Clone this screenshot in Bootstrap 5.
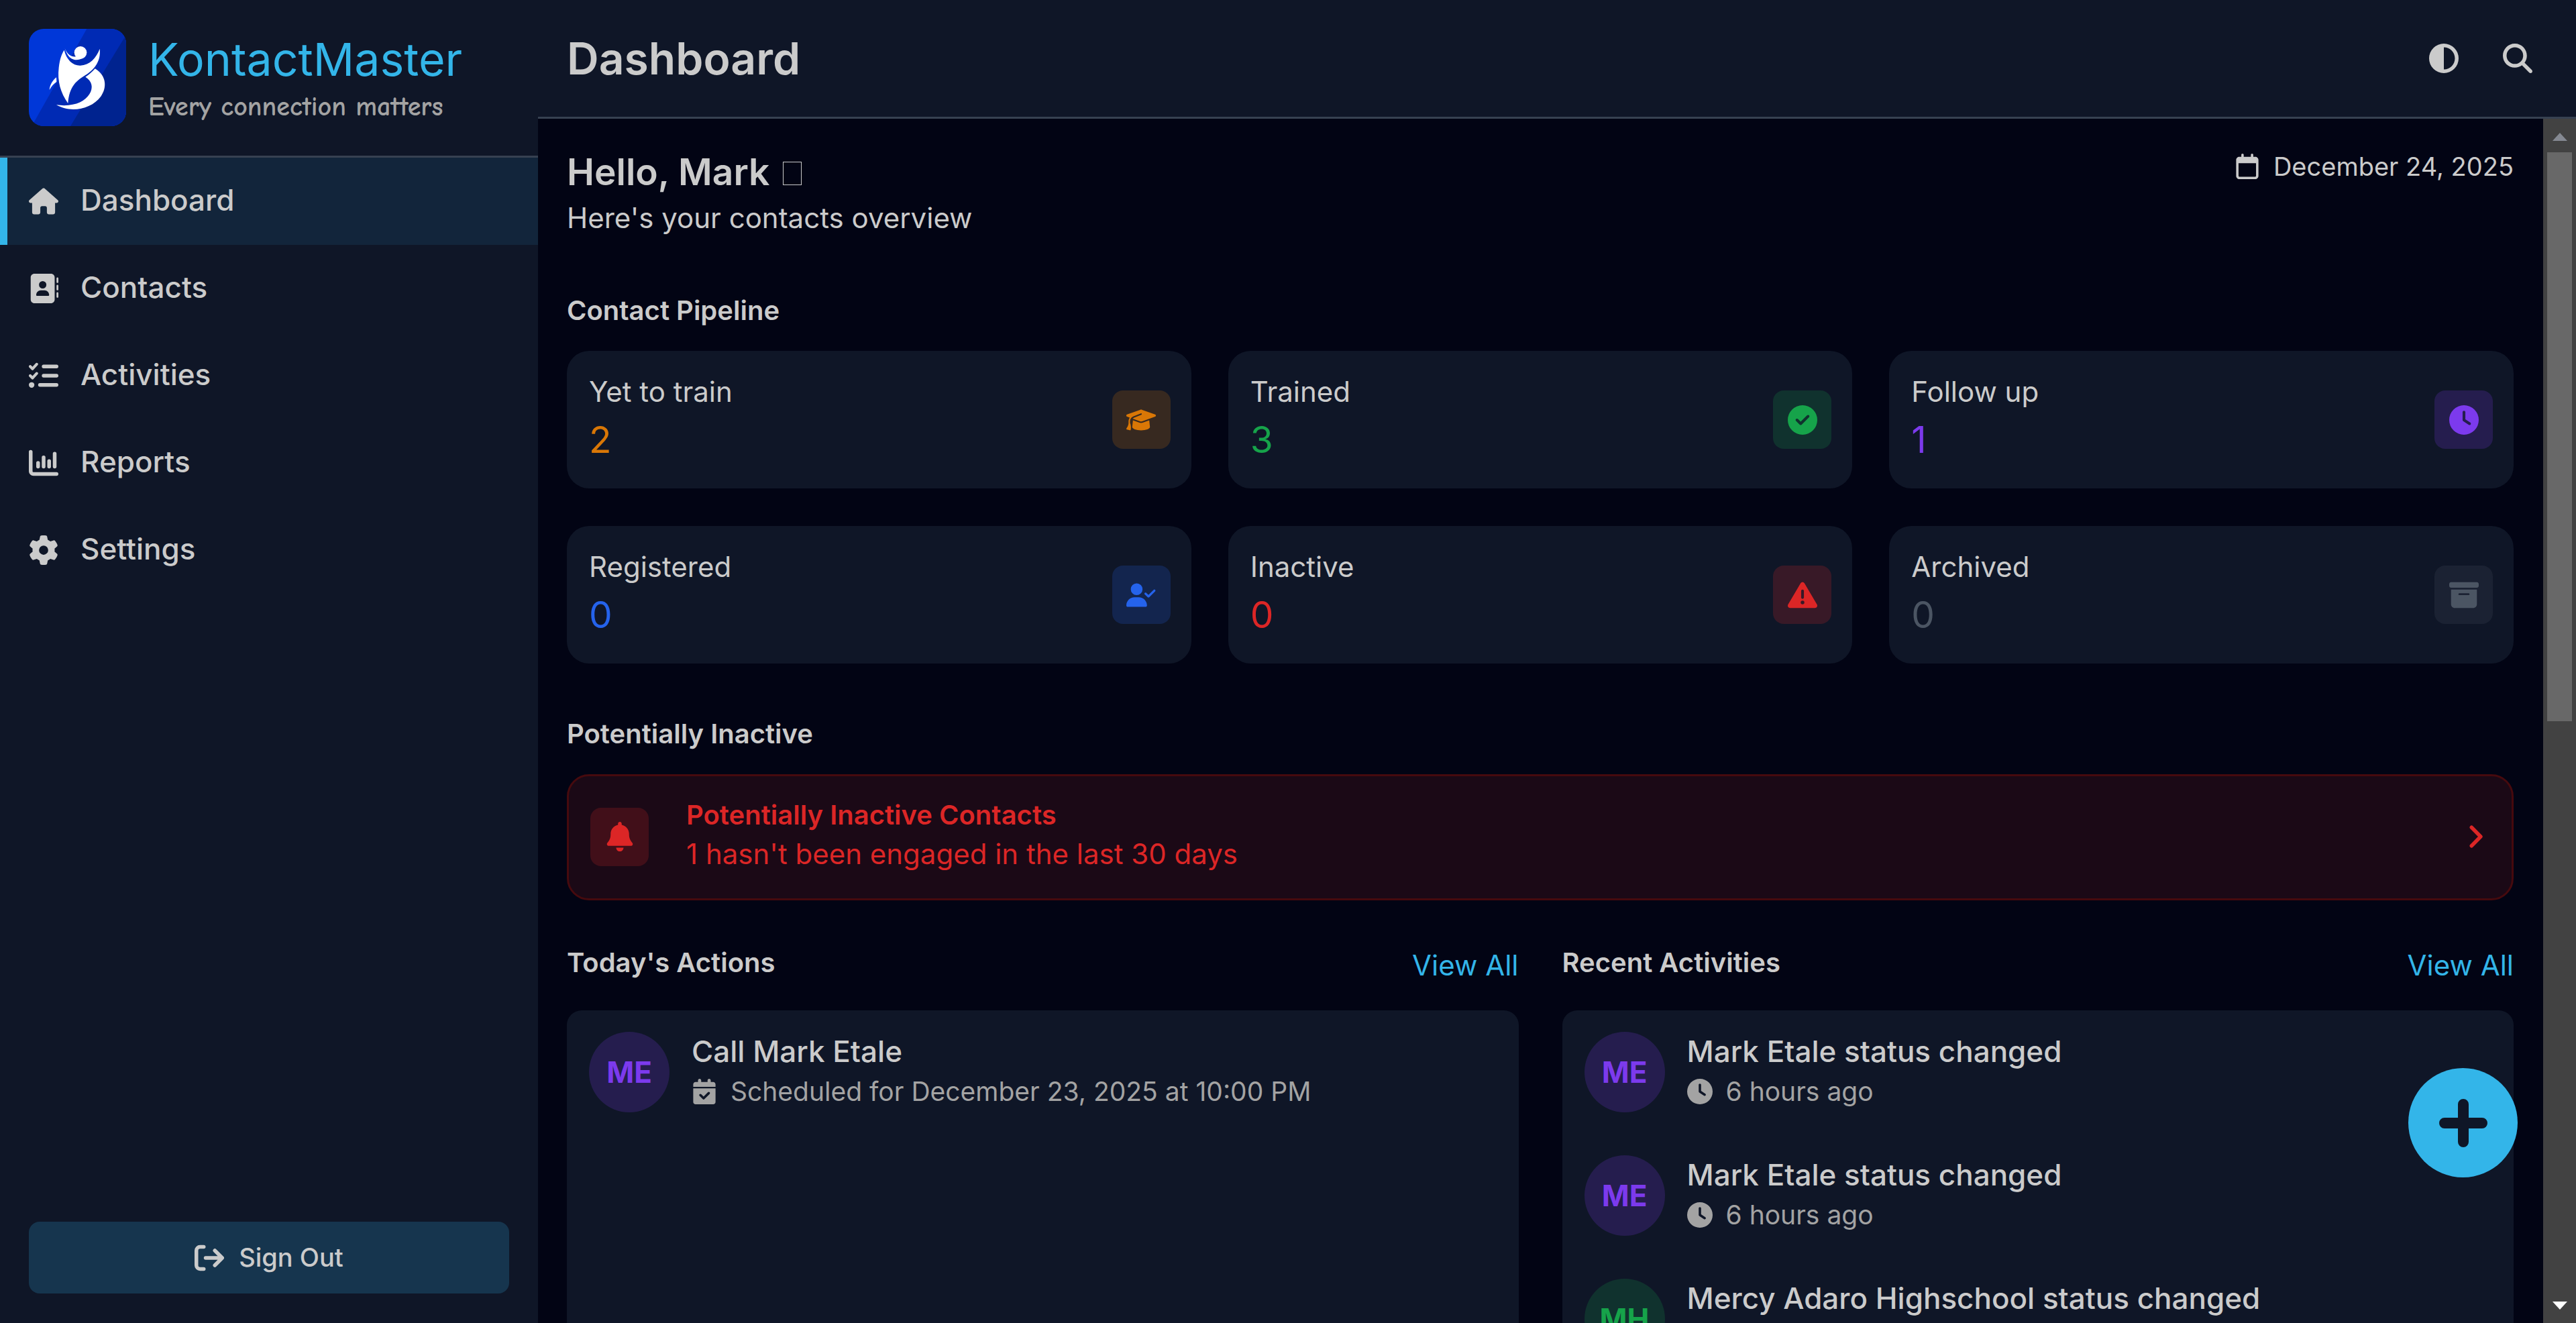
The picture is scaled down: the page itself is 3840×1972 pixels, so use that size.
<!DOCTYPE html>
<html lang="en" data-bs-theme="dark">
<head>
<meta charset="utf-8">
<meta name="viewport" content="width=device-width, initial-scale=1">
<title>KontactMaster - Dashboard</title>
<link href="https://cdn.jsdelivr.net/npm/bootstrap@5.3.0/dist/css/bootstrap.min.css" rel="stylesheet">
<style>
:root{--page:#020414;--surface:#0f1627;--ink:#cbcbcb;--dim:#a3a3a3;--line:#374151;--accent:#33b5e9;
--orange:217,119,6;--green:22,163,74;--purple:124,58,237;--blue:37,99,235;--red:220,38,38;--gray:75,85,99}
body{font-family:Inter,"Liberation Sans",sans-serif;font-size:42px;line-height:58px;background:var(--page);color:var(--ink)}
svg{display:block;flex:none;fill:currentColor}
h1,h2,h3,p{margin:0}
h1,h2,h3{color:inherit}
a{text-decoration:none}
.ico{width:44px;height:44px}
.ico-sm{width:38px;height:38px}
.stroke{fill:none;stroke:currentColor;stroke-linecap:round;stroke-linejoin:round}
.app-side{width:802px;background:var(--surface)}
.brand{padding:43px 43px 44px;gap:33px;border-bottom:3px solid var(--line)}
.brand-name{font-size:68px;line-height:86px;font-weight:400;color:var(--accent)}
.brand-tag{font-family:"Comic Sans MS","Comic Neue",cursive;font-size:40px;line-height:56px;font-weight:700;color:var(--dim)}
.side-link{height:130px;padding:0 43px;gap:33px;color:var(--ink);font-size:44px;font-weight:500;border-radius:0}
.side-link span{padding-bottom:5px}
.side-link:hover{color:var(--accent)}
.side-link.active{background:rgba(51,181,233,.1);color:var(--ink);box-shadow:inset 11px 0 var(--accent)}
.side-foot{padding:44px 43px}
.btn-out{height:107px;border:0;border-radius:16px;background:rgba(51,181,233,.2);color:var(--ink);font-size:38px;font-weight:500;gap:22px}
.topbar{height:177px;padding:0 43px;background:var(--surface);border-bottom:3px solid var(--line)}
.page-name{font-size:66px;line-height:80px;font-weight:600}
.tools{gap:22px}
.btn-tool{width:88px;height:88px;padding:0;color:var(--ink);border:0}
.content{padding:43px 44px 0 43px;min-width:0}
.hello{font-size:55px;line-height:72px;font-weight:600}
.wave-box{display:inline-block;width:28px;height:35px;margin-left:6px;border:1px solid var(--ink)}
.sub{line-height:66px}
.date{font-size:38px;gap:22px;line-height:56px}
.sect{font-size:40px;line-height:58px;font-weight:600}
.sect-gap{margin-top:76px}
.tiles{display:grid;grid-template-columns:repeat(3,1fr);gap:56px 55px;margin-top:31px}
.tile{background:var(--surface);color:inherit;border:0;border-radius:33px;padding:33px 31px 33px 33px;height:205px;flex-direction:row}
.tile-num{font-size:55px;line-height:84px;color:rgb(var(--c))}
.chip{width:87px;height:87px;border-radius:16px;background:rgba(var(--c),.2);color:rgb(var(--c))}
.c-orange{--c:var(--orange)}.c-green{--c:var(--green)}.c-purple{--c:var(--purple)}.c-blue{--c:var(--blue)}.c-red{--c:var(--red)}.c-gray{--c:var(--gray)}
.alert-row{border:3px solid #460a0e;border-radius:33px;background:#1b0916;color:rgb(var(--red));padding:30px 42px 32px 32px;height:188px;gap:56px;margin-top:31px}
.alert-row:hover{color:rgb(var(--red))}
.alert-text{padding-bottom:6px}
.lists{display:grid;grid-template-columns:1fr 1fr;gap:65px;margin-top:64px}
.view-all{color:var(--accent);line-height:66px}
.panel{background:var(--surface);border-radius:22px;padding:0 33px;margin-top:34px}
.entry{padding:32px 0;gap:33px}
.entry-name{font-size:44px;line-height:58px;font-weight:500}
.avatar{width:120px;height:120px;border-radius:50%;font-size:44px;font-weight:700;background:rgba(var(--c),.2);color:rgb(var(--c))}
.entry-sub{font-size:39px;line-height:62px;color:var(--dim);gap:20px}
.scrollbar-col{width:49px;background:#424242;padding:21px 0 20px}
.scroll-thumb{width:37px;height:848px;margin-top:17px;background:#686868}
.fab{right:87px;bottom:217px;width:163px;height:163px;border:0;background:var(--accent);color:var(--surface)}
</style>
</head>
<body class="vh-100 d-flex overflow-hidden">
<aside class="app-side d-flex flex-column flex-shrink-0">
  <div class="brand d-flex align-items-center">
    <svg width="145" height="145" viewBox="9 9 435 435" role="img" aria-label="KontactMaster logo">
      <defs><clipPath id="lg"><rect x="9" y="9" width="435" height="435" rx="66"/></clipPath></defs>
      <g clip-path="url(#lg)">
        <path fill="#0037d8" d="M9 9h435v435H9z"/>
        <path fill="#002ab4" d="M268 9h176v435H22z"/>
        <path fill="#00238f" d="M444 36v408H195z"/>
      </g>
      <g fill="#fff">
        <circle cx="240" cy="115" r="28"/>
        <path d="M170 97c12 28 28 38 50 36l32 6c-28 17-56 9-70-15-4-7-9-17-12-27z"/>
        <path d="M167 104c10 44 40 70 72 69 42-2 72-34 87-75 6 54-22 90-58 114-46 28-78 52-84 130-34-50-48-98-41-160 4-36 12-60 24-78z"/>
        <path d="M305 187c52 30 54 86 26 124-44 60-138 74-199 38 74 10 126-12 148-48 18-30 12-58-18-77 16-10 30-22 43-37z"/>
        <path d="M132 226l1 20c-12 8-22 18-32 36 2-22 14-42 31-56z"/>
      </g>
    </svg>
    <div>
      <div class="brand-name">KontactMaster</div>
      <div class="brand-tag">Every connection matters</div>
    </div>
  </div>
  <nav class="nav flex-column">
    <a class="side-link nav-link d-flex align-items-center active" href="#" aria-current="page">
      <svg class="ico" viewBox="0 0 576 512"><path d="M575.800 255.500c0 18-15 32.100-32 32.100h-32l.7 160.200c0 2.700-.2 5.400-.5 8.100V472c0 22.100-17.900 40-40 40H392c-22.100 0-40-17.900-40-40V384c0-17.700-14.300-32-32-32H256c-17.700 0-32 14.300-32 32v88c0 22.100-17.900 40-40 40H104c-22.100 0-40-17.900-40-40V287.600H32c-18 0-32-14-32-32.100c0-9 3-17 10-24L266.400 8c7-7 15-8 22-8s15 2 21 7L564.800 231.500c8 7 12 15 11 24z"/></svg><span>Dashboard</span></a>
    <a class="side-link nav-link d-flex align-items-center" href="#">
      <svg class="ico" viewBox="0 0 512 512"><path d="M96 0C60.700 0 32 28.700 32 64V448c0 35.300 28.700 64 64 64H384c35.300 0 64-28.700 64-64V64c0-35.300-28.700-64-64-64H96zM208 288h64c44.200 0 80 35.800 80 80c0 8.800-7.200 16-16 16H144c-8.800 0-16-7.200-16-16c0-44.200 35.800-80 80-80zm-32-96a64 64 0 1 1 128 0 64 64 0 1 1 -128 0zM512 80c0-8.800-7.200-16-16-16s-16 7.200-16 16v64c0 8.800 7.200 16 16 16s16-7.200 16-16V80zM496 192c-8.800 0-16 7.200-16 16v64c0 8.800 7.200 16 16 16s16-7.200 16-16V208c0-8.800-7.200-16-16-16zm16 144c0-8.800-7.200-16-16-16s-16 7.200-16 16v64c0 8.800 7.200 16 16 16s16-7.200 16-16V336z"/></svg><span>Contacts</span></a>
    <a class="side-link nav-link d-flex align-items-center" href="#">
      <svg class="ico" viewBox="0 0 512 512"><path class="stroke" stroke-width="48" d="M24 96l40 40 72-80M24 256l40 40 72-80"/><path class="stroke" stroke-width="62" d="M256 96h225M256 256h225M192 416h289"/><circle cx="48" cy="416" r="48"/></svg><span>Activities</span></a>
    <a class="side-link nav-link d-flex align-items-center" href="#">
      <svg class="ico" viewBox="0 0 512 512"><path class="stroke" stroke-width="64" d="M32 64v336a48 48 0 0 0 48 48h400M160 256v64M256 160v160M352 224v96M448 96v224"/></svg><span>Reports</span></a>
    <a class="side-link nav-link d-flex align-items-center" href="#">
      <svg class="ico" viewBox="0 0 512 512"><path d="M495.900 166.600c3.200 8.700 .5 18.400-6.400 24.600l-43.300 39.400c1.100 8.300 1.700 16.800 1.700 25.400s-.6 17.100-1.700 25.400l43.300 39.400c6.900 6.200 9.600 15.900 6.400 24.600c-4.400 11.900-9.700 23.300-15.800 34.300l-4.700 8.100c-6.600 11-14 21.400-22.100 31.200c-5.900 7.200-15.700 9.600-24.500 6.800l-55.700-17.700c-13.400 10.300-28.200 18.900-44 25.400l-12.500 57.100c-2 9.100-9 16.300-18.200 17.800c-13.800 2.300-28 3.500-42.500 3.500s-28.700-1.200-42.500-3.500c-9.200-1.500-16.200-8.700-18.200-17.800l-12.500-57.100c-15.800-6.500-30.600-15.100-44-25.400L83.100 425.900c-8.800 2.800-18.600 .3-24.500-6.800c-8.100-9.800-15.500-20.200-22.100-31.200l-4.700-8.100c-6.100-11-11.400-22.400-15.800-34.300c-3.200-8.700-.5-18.400 6.400-24.600l43.300-39.400C64.600 273.100 64 264.600 64 256s.6-17.100 1.700-25.400L22.400 191.200c-6.900-6.200-9.600-15.900-6.400-24.600c4.400-11.900 9.700-23.300 15.800-34.300l4.700-8.100c6.600-11 14-21.400 22.100-31.200c5.900-7.200 15.700-9.600 24.500-6.800l55.700 17.700c13.400-10.300 28.200-18.900 44-25.400l12.500-57.100c2-9.100 9-16.300 18.200-17.800C227.300 1.200 241.500 0 256 0s28.700 1.200 42.500 3.500c9.200 1.500 16.200 8.700 18.200 17.800l12.500 57.100c15.800 6.500 30.600 15.100 44 25.400l55.700-17.700c8.800-2.800 18.600-.3 24.500 6.800c8.100 9.800 15.500 20.200 22.100 31.200l4.700 8.100c6.100 11 11.400 22.400 15.800 34.300zM256 336a80 80 0 1 0 0-160 80 80 0 1 0 0 160z"/></svg><span>Settings</span></a>
  </nav>
  <div class="side-foot mt-auto">
    <button type="button" class="btn btn-out w-100 d-flex align-items-center justify-content-center">
      <svg class="ico" viewBox="0 0 512 512"><path class="stroke" stroke-width="64" d="M160 64H96a64 64 0 0 0-64 64v256a64 64 0 0 0 64 64h64M192 256h280M352 128l128 128-128 128"/></svg>Sign Out</button>
  </div>
</aside>
<div class="d-flex flex-column flex-grow-1 overflow-hidden">
  <header class="topbar d-flex align-items-center justify-content-between flex-shrink-0">
    <h1 class="page-name">Dashboard</h1>
    <div class="tools d-flex">
      <button type="button" class="btn btn-tool d-flex align-items-center justify-content-center" aria-label="Toggle theme"><svg class="ico" viewBox="0 0 512 512"><path d="M448 256c0-106-86-192-192-192V448c106 0 192-86 192-192zM0 256a256 256 0 1 1 512 0A256 256 0 1 1 0 256z"/></svg></button>
      <button type="button" class="btn btn-tool d-flex align-items-center justify-content-center" aria-label="Search"><svg class="ico" viewBox="0 0 512 512"><path d="M416 208c0 45.900-14.900 88.300-40 122.700L502.600 457.400c12.500 12.500 12.500 32.800 0 45.300s-32.800 12.500-45.300 0L330.700 376c-34.400 25.200-76.800 40-122.700 40C93.100 416 0 322.900 0 208S93.100 0 208 0S416 93.100 416 208zM208 352a144 144 0 1 0 0-288 144 144 0 1 0 0 288z"/></svg></button>
    </div>
  </header>
  <div class="d-flex flex-grow-1 overflow-hidden">
    <main class="content flex-grow-1">
      <div class="d-flex justify-content-between align-items-start">
        <div>
          <h2 class="hello">Hello, Mark <span class="wave-box" role="img" aria-label="waving hand"></span></h2>
          <p class="sub">Here's your contacts overview</p>
        </div>
        <div class="date d-flex align-items-center">
          <svg width="34" height="38" viewBox="0 0 448 512"><path d="M152 24c0-13.300-10.700-24-24-24s-24 10.700-24 24V64H64C28.700 64 0 92.700 0 128V448c0 35.300 28.700 64 64 64H384c35.300 0 64-28.700 64-64V128c0-35.300-28.700-64-64-64H344V24c0-13.300-10.700-24-24-24s-24 10.700-24 24V64H152V24zM48 192H400V448c0 8.800-7.200 16-16 16H64c-8.800 0-16-7.200-16-16V192z"/></svg>
          <span>December 24, 2025</span>
        </div>
      </div>

      <h3 class="sect sect-gap">Contact Pipeline</h3>
      <div class="tiles">
        <div class="tile card justify-content-between align-items-center c-orange">
          <div><div>Yet to train</div><div class="tile-num">2</div></div>
          <div class="chip d-flex align-items-center justify-content-center"><svg class="ico" viewBox="0 0 640 512"><path d="M320 32c-8.100 0-16.100 1.400-23.700 4.100L15.800 137.400C6.300 140.900 0 149.900 0 160s6.300 19.100 15.800 22.600l57.900 20.900C57.300 229.300 48 259.800 48 291.900v28.100c0 28.400-10.800 57.700-22.300 80.800c-6.500 13-13.900 25.800-22.500 37.600C0 442.700-.9 448.300 .9 453.400s6 8.900 11.200 10.200l64 16c4.200 1.100 8.700 .3 12.400-2s6.300-6.100 7.100-10.400c8.600-42.800 4.300-81.200-2.100-108.700C90.300 344.300 86 329.800 80 316.500V291.900c0-30.200 10.200-58.700 27.900-81.500c12.900-15.500 29.600-28 49.200-35.700l157-61.700c8.200-3.200 17.500 .8 20.700 9s-.8 17.500-9 20.700l-157 61.700c-12.400 4.900-23.300 12.400-32.200 21.600l159.600 57.600c7.600 2.700 15.600 4.100 23.700 4.100s16.100-1.400 23.700-4.100L624.200 182.600c9.500-3.400 15.800-12.500 15.800-22.600s-6.300-19.100-15.800-22.600L343.700 36.100C336.100 33.400 328.100 32 320 32zM128 408c0 35.300 86 72 192 72s192-36.700 192-72L496.700 262.600 354.500 314c-11.100 4-22.800 6-34.500 6s-23.500-2-34.500-6L143.300 262.600 128 408z"/></svg></div>
        </div>
        <div class="tile card justify-content-between align-items-center c-green">
          <div><div>Trained</div><div class="tile-num">3</div></div>
          <div class="chip d-flex align-items-center justify-content-center"><svg class="ico" viewBox="0 0 512 512"><path d="M256 512A256 256 0 1 0 256 0a256 256 0 1 0 0 512zM369 209L241 337c-9.400 9.400-24.600 9.400-33.900 0l-64-64c-9.400-9.400-9.400-24.600 0-33.900s24.600-9.400 33.900 0l47 47L335 175c9.400-9.400 24.600-9.400 33.900 0s9.400 24.600 0 33.900z"/></svg></div>
        </div>
        <div class="tile card justify-content-between align-items-center c-purple">
          <div><div>Follow up</div><div class="tile-num">1</div></div>
          <div class="chip d-flex align-items-center justify-content-center"><svg class="ico" viewBox="0 0 512 512"><path id="clk" d="M256 0a256 256 0 1 1 0 512A256 256 0 1 1 256 0zM232 120V256c0 8 4 15.500 10.700 20l96 64c11 7.400 25.900 4.400 33.300-6.700s4.400-25.900-6.700-33.300L280 243.200V120c0-13.300-10.700-24-24-24s-24 10.700-24 24z"/></svg></div>
        </div>
        <div class="tile card justify-content-between align-items-center c-blue">
          <div><div>Registered</div><div class="tile-num">0</div></div>
          <div class="chip d-flex align-items-center justify-content-center"><svg class="ico" viewBox="0 0 640 512"><path d="M96 128a128 128 0 1 1 256 0A128 128 0 1 1 96 128zM0 482.300C0 383.800 79.800 304 178.300 304h91.400C368.200 304 448 383.800 448 482.300c0 16.400-13.300 29.700-29.700 29.700H29.700C13.300 512 0 498.700 0 482.300zM625 177L497 305c-9.400 9.400-24.600 9.400-33.900 0l-64-64c-9.400-9.400-9.400-24.600 0-33.900s24.600-9.400 33.900 0l47 47L591 143c9.400-9.400 24.600-9.400 33.900 0s9.400 24.600 0 33.900z"/></svg></div>
        </div>
        <div class="tile card justify-content-between align-items-center c-red">
          <div><div>Inactive</div><div class="tile-num">0</div></div>
          <div class="chip d-flex align-items-center justify-content-center"><svg class="ico" viewBox="0 0 512 512"><path d="M256 32c14.200 0 27.300 7.500 34.500 19.800l216 368c7.300 12.400 7.300 27.700 .2 40.100S486.300 480 472 480H40c-14.300 0-27.600-7.700-34.700-20.100s-7-27.800 .2-40.100l216-368C228.700 39.500 241.800 32 256 32zm0 128c-13.300 0-24 10.700-24 24V296c0 13.300 10.700 24 24 24s24-10.700 24-24V184c0-13.300-10.700-24-24-24zm32 224a32 32 0 1 0 -64 0 32 32 0 1 0 64 0z"/></svg></div>
        </div>
        <div class="tile card justify-content-between align-items-center c-gray">
          <div><div>Archived</div><div class="tile-num">0</div></div>
          <div class="chip d-flex align-items-center justify-content-center"><svg class="ico" viewBox="0 0 512 512"><path d="M32 32H480c17.700 0 32 14.300 32 32V96c0 17.700-14.300 32-32 32H32C14.300 128 0 113.700 0 96V64C0 46.300 14.300 32 32 32zm0 128H480V416c0 35.300-28.700 64-64 64H96c-35.300 0-64-28.700-64-64V160zm128 80c0 8.800 7.200 16 16 16H336c8.800 0 16-7.200 16-16s-7.200-16-16-16H176c-8.800 0-16 7.200-16 16z"/></svg></div>
        </div>
      </div>

      <h3 class="sect sect-gap">Potentially Inactive</h3>
      <a class="alert-row d-flex align-items-center c-red" href="#">
        <span class="chip d-flex align-items-center justify-content-center flex-shrink-0"><svg class="ico" viewBox="0 0 448 512"><path d="M224 0c-17.700 0-32 14.300-32 32V51.200C119 66 64 130.600 64 208v18.800c0 47-17.300 92.400-48.500 127.600l-7.400 8.300c-8.400 9.400-10.400 22.900-5.300 34.400S19.400 416 32 416H416c12.600 0 24-7.400 29.200-18.900s3.100-25-5.300-34.400l-7.400-8.300C401.300 319.200 384 273.900 384 226.800V208c0-77.400-55-142-128-156.800V32c0-17.700-14.300-32-32-32zm45.300 493.300c12-12 18.700-28.300 18.700-45.300H160c0 17 6.700 33.300 18.700 45.300s28.300 18.700 45.300 18.700s33.300-6.700 45.300-18.700z"/></svg></span>
        <span class="alert-text flex-grow-1 d-flex flex-column"><span class="sect">Potentially Inactive Contacts</span><span>1 hasn't been engaged in the last 30 days</span></span>
        <svg width="22" height="44" viewBox="0 0 256 512"><path class="stroke" stroke-width="64" d="M50 96l158 160L50 416"/></svg>
      </a>

      <div class="lists">
        <section>
          <div class="d-flex justify-content-between align-items-start"><h3 class="sect">Today's Actions</h3><a class="view-all" href="#">View All</a></div>
          <div class="panel vh-100">
            <div class="entry d-flex c-purple">
              <div class="avatar d-flex align-items-center justify-content-center flex-shrink-0">ME</div>
              <div><div class="entry-name">Call Mark Etale</div>
              <div class="entry-sub d-flex align-items-center"><svg class="ico-sm" viewBox="0 0 448 512"><path d="M128 0c17.700 0 32 14.300 32 32V64H288V32c0-17.700 14.300-32 32-32s32 14.300 32 32V64h48c26.500 0 48 21.500 48 48v48H0V112C0 85.500 21.500 64 48 64H96V32c0-17.700 14.300-32 32-32zM0 192H448V464c0 26.500-21.500 48-48 48H48c-26.500 0-48-21.500-48-48V192zM329 305c9.400-9.400 9.400-24.600 0-33.900s-24.600-9.400-33.900 0l-87 87-47-47c-9.400-9.400-24.600-9.400-33.900 0s-9.400 24.600 0 33.900l64 64c9.400 9.400 24.600 9.400 33.900 0L329 305z"/></svg>Scheduled for December 23, 2025 at 10:00 PM</div></div>
            </div>
          </div>
        </section>
        <section>
          <div class="d-flex justify-content-between align-items-start"><h3 class="sect">Recent Activities</h3><a class="view-all" href="#">View All</a></div>
          <div class="panel vh-100">
            <div class="entry d-flex c-purple">
              <div class="avatar d-flex align-items-center justify-content-center flex-shrink-0">ME</div>
              <div><div class="entry-name">Mark Etale status changed</div>
              <div class="entry-sub d-flex align-items-center"><svg class="ico-sm" viewBox="0 0 512 512"><use href="#clk"/></svg>6 hours ago</div></div>
            </div>
            <div class="entry d-flex c-purple">
              <div class="avatar d-flex align-items-center justify-content-center flex-shrink-0">ME</div>
              <div><div class="entry-name">Mark Etale status changed</div>
              <div class="entry-sub d-flex align-items-center"><svg class="ico-sm" viewBox="0 0 512 512"><use href="#clk"/></svg>6 hours ago</div></div>
            </div>
            <div class="entry d-flex c-green">
              <div class="avatar d-flex align-items-center justify-content-center flex-shrink-0">MH</div>
              <div><div class="entry-name">Mercy Adaro Highschool status changed</div></div>
            </div>
          </div>
        </section>
      </div>
    </main>
    <div class="scrollbar-col flex-shrink-0 d-flex flex-column align-items-center" aria-hidden="true">
      <svg width="22" height="12" viewBox="0 0 22 12"><path fill="#858992" d="M11 0l11 12H0z"/></svg>
      <div class="scroll-thumb"></div>
      <svg class="mt-auto" width="22" height="12" viewBox="0 0 22 12"><path fill="#fff" d="M0 0h22L11 12z"/></svg>
    </div>
  </div>
</div>
<button type="button" class="fab btn rounded-circle position-fixed d-flex align-items-center justify-content-center p-0" aria-label="Add"><svg width="72" height="72" viewBox="0 0 72 72"><path class="stroke" stroke-width="16" d="M36 8v56M8 36h56"/></svg></button>
<script src="https://cdn.jsdelivr.net/npm/bootstrap@5.3.0/dist/js/bootstrap.bundle.min.js"></script>
</body>
</html>
